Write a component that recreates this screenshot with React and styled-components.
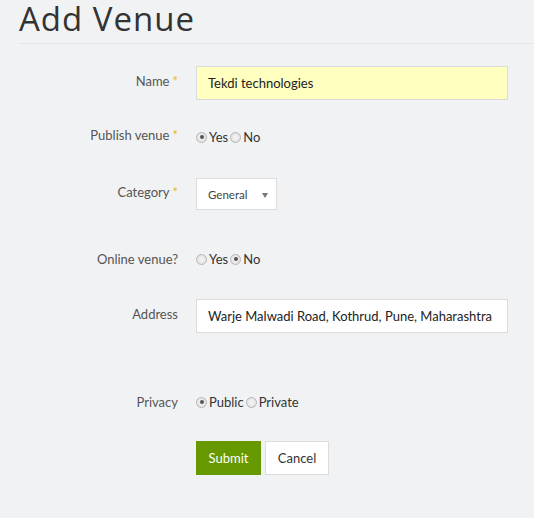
import React, { useState } from "react"
import styled, { createGlobalStyle } from "styled-components"

const GlobalStyle = createGlobalStyle`
  body {
    margin: 0;
    background: #f1f2f4;
    font-family: "Lato", "Liberation Sans", sans-serif;
    color: #333;
  }
`

const Page = styled.div`
  padding: 0 0 40px 19px;
`

const Title = styled.h1`
  box-sizing: border-box;
  margin: 0;
  height: 44px;
  font-family: "Open Sans", "Liberation Sans", sans-serif;
  font-weight: 400;
  font-size: 33px;
  letter-spacing: 1px;
  line-height: 37px;
  color: #333;
  border-bottom: 1px solid #e6e7e9;
`

const Form = styled.form`
  padding-top: 22px;
`

const Row = styled.div`
  display: flex;
  align-items: center;
  margin-top: ${p => p.$gap || 0}px;
  min-height: ${p => p.$h || 20}px;
`

const Label = styled.label`
  width: 159px;
  flex-shrink: 0;
  text-align: right;
  font-size: 13px;
  color: #555;
  margin-right: 18px;
  margin-top: ${p => (p.$up ? -4 : 0)}px;
`

const Star = styled.span`
  color: #e9b824;
  margin-left: 3px;
`

const TextInput = styled.input`
  box-sizing: border-box;
  width: 312px;
  height: 34px;
  padding: 0 11px;
  border: 1px solid #dcdcdc;
  background: ${p => p.$bg || "#fff"};
  font-family: inherit;
  font-size: 13px;
  color: #222;
  outline: none;
`

const Radios = styled.div`
  display: flex;
  align-items: center;
  font-size: 13px;
  color: #333;
`

const Choice = styled.label`
  display: flex;
  align-items: center;
  margin-right: 2px;
`

const Radio = styled.input`
  appearance: none;
  box-sizing: border-box;
  width: 11px;
  height: 11px;
  margin: 0 2px 0 0;
  border-radius: 50%;
  border: 1px solid #b5b5b5;
  background: radial-gradient(circle, #f6f6f6 0%, #dcdcdc 100%);
  position: relative;
  &:checked::after {
    content: "";
    position: absolute;
    left: 2.5px;
    top: 2.5px;
    width: 4px;
    height: 4px;
    border-radius: 50%;
    background: #555;
  }
`

const SelectBox = styled.div`
  box-sizing: border-box;
  width: 81px;
  height: 32px;
  border: 1px solid #dcdcdc;
  background: #fff;
  display: flex;
  align-items: center;
  justify-content: space-between;
  padding: 0 8px 0 11px;
  font-size: 11.5px;
  color: #444;
`

const Caret = styled.span`
  width: 0;
  height: 0;
  border-left: 3.5px solid transparent;
  border-right: 3.5px solid transparent;
  border-top: 5px solid #777;
  margin-top: 2px;
`

const Buttons = styled.div`
  display: flex;
  gap: 4px;
  margin-left: 177px;
  margin-top: 29px;
`

const Button = styled.button`
  box-sizing: border-box;
  height: 34px;
  width: ${p => p.$w}px;
  border: 1px solid ${p => (p.$primary ? "#669900" : "#dcdcdc")};
  background: ${p => (p.$primary ? "#669900" : "#fff")};
  color: ${p => (p.$primary ? "#fff" : "#333")};
  font-family: inherit;
  font-size: 13px;
  padding: 0;
  cursor: pointer;
`

const RadioGroup = ({ name, options, value, onChange }) => (
  <Radios>
    {options.map(o => (
      <Choice key={o}>
        <Radio
          type="radio"
          name={name}
          checked={value === o}
          onChange={() => onChange(o)}
        />
        {o}
      </Choice>
    ))}
  </Radios>
)

export default function App() {
  const [publish, setPublish] = useState("Yes")
  const [online, setOnline] = useState("No")
  const [privacy, setPrivacy] = useState("Public")

  return (
    <Page>
      <GlobalStyle />
      <Title>Add Venue</Title>
      <Form onSubmit={e => e.preventDefault()}>
        <Row $h={34}>
          <Label $up>
            Name<Star>*</Star>
          </Label>
          <TextInput $bg="#ffffc0" defaultValue="Tekdi technologies" />
        </Row>
        <Row $gap={27}>
          <Label $up>
            Publish venue<Star>*</Star>
          </Label>
          <RadioGroup
            name="publish"
            options={["Yes", "No"]}
            value={publish}
            onChange={setPublish}
          />
        </Row>
        <Row $gap={31} $h={32}>
          <Label $up>
            Category<Star>*</Star>
          </Label>
          <SelectBox>
            General
            <Caret />
          </SelectBox>
        </Row>
        <Row $gap={39}>
          <Label>Online venue?</Label>
          <RadioGroup
            name="online"
            options={["Yes", "No"]}
            value={online}
            onChange={setOnline}
          />
        </Row>
        <Row $gap={30} $h={34}>
          <Label $up>Address</Label>
          <TextInput defaultValue="Warje Malwadi Road, Kothrud, Pune, Maharashtra" />
        </Row>
        <Row $gap={59}>
          <Label>Privacy</Label>
          <RadioGroup
            name="privacy"
            options={["Public", "Private"]}
            value={privacy}
            onChange={setPrivacy}
          />
        </Row>
        <Buttons>
          <Button $primary $w={65} type="submit">
            Submit
          </Button>
          <Button $w={64} type="button">
            Cancel
          </Button>
        </Buttons>
      </Form>
    </Page>
  )
}
